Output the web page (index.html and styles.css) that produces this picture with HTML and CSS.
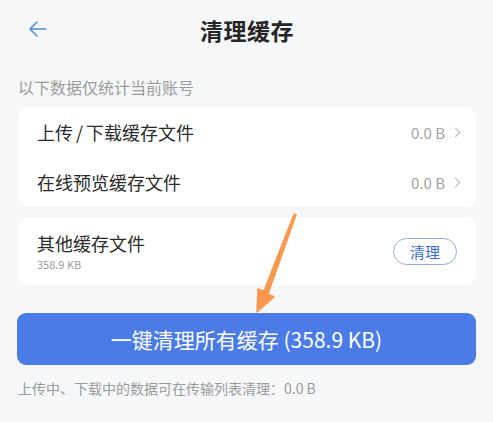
FILE: index.html
```html
<!DOCTYPE html>
<html lang="zh-CN">
<head>
    <meta charset="UTF-8">
    <meta name="viewport" content="width=device-width, initial-scale=1.0">
    <title>清理缓存</title>
    <link rel="stylesheet" href="styles.css">
</head>
<body>
    <div class="page">
        <header class="topbar">
            <button class="back" aria-label="返回">
                <svg width="18" height="16" viewBox="0 0 18 16" fill="none" stroke="#4a8de2" stroke-width="1.6" stroke-linecap="round" stroke-linejoin="round">
                    <path d="M8 1 L1 8 L8 15 M1 8 H17"/>
                </svg>
            </button>
            <h1>清理缓存</h1>
        </header>

        <p class="hint">以下数据仅统计当前账号</p>

        <div class="card">
            <div class="row">
                <span class="row-title">上传<span class="slash">/</span>下载缓存文件</span>
                <span class="row-value">0.0 B <i class="chevron"></i></span>
            </div>
            <div class="row">
                <span class="row-title">在线预览缓存文件</span>
                <span class="row-value">0.0 B <i class="chevron"></i></span>
            </div>
        </div>

        <div class="card">
            <div class="row row-other">
                <div class="other-text">
                    <span class="row-title">其他缓存文件</span>
                    <span class="row-sub">358.9 KB</span>
                </div>
                <button class="pill">清理</button>
            </div>
        </div>

        <button class="clear-all">一键清理所有缓存 (358.9 KB)</button>

        <p class="foot">上传中、下载中的数据可在传输列表清理：0.0 B</p>

        <svg class="pointer" width="60" height="110" viewBox="0 0 60 110">
            <path d="M54 3 L24 80 L18 78 L17 101 L34 86 L28 83 L56 4 Z" fill="#f79a4f" stroke="#f79a4f" stroke-width="1.5" stroke-linejoin="round"/>
        </svg>
    </div>
</body>
</html>
```

FILE: styles.css
```css
:root {
    --bg: #f6f7f9;
    --card: #ffffff;
    --text: #2b2b2b;
    --muted: #9b9b9b;
    --blue: #4a7be6;
}

* {
    box-sizing: border-box;
}

body {
    margin: 0;
    background: var(--bg);
    font-family: "Noto Sans CJK SC", "Noto Sans", sans-serif;
    color: var(--text);
}

.page {
    position: relative;
    width: 493px;
    height: 422px;
    padding: 0 17px 0 18px;
    overflow: hidden;
}

.topbar {
    position: relative;
    height: 60px;
    display: flex;
    align-items: center;
    justify-content: center;
}

.topbar h1 {
    margin: 0;
    font-size: 23px;
    font-weight: 700;
    color: #262626;
    line-height: 1;
    letter-spacing: 0.5px;
}

.back {
    position: absolute;
    left: 11px;
    top: 21px;
    padding: 0;
    border: none;
    background: none;
    line-height: 0;
}

.hint {
    margin: 17px 0 10px;
    font-size: 16px;
    line-height: 20px;
    color: var(--muted);
}

.card {
    background: var(--card);
    border-radius: 10px;
    margin-bottom: 10px;
}

.row {
    height: 50px;
    display: flex;
    align-items: center;
    justify-content: space-between;
    padding: 0 17px 0 19px;
}

.row-title {
    font-size: 18px;
    line-height: 22px;
    color: var(--text);
}

.slash {
    margin: 0 3px;
}

.row-value {
    display: flex;
    align-items: center;
    font-size: 15px;
    color: #a3a3a3;
}

.chevron {
    display: inline-block;
    width: 7px;
    height: 7px;
    margin-left: 7px;
    border-top: 1.5px solid #b0b0b0;
    border-right: 1.5px solid #b0b0b0;
    transform: rotate(45deg);
}

.row-other {
    height: 68px;
    padding-right: 19px;
}

.other-text {
    display: flex;
    flex-direction: column;
    gap: 3px;
}

.row-sub {
    font-size: 11px;
    line-height: 14px;
    color: var(--muted);
}

.pill {
    width: 64px;
    height: 27px;
    border: 1px solid #93a8d4;
    border-radius: 14px;
    background: #fff;
    color: #3c6dcc;
    font-family: inherit;
    font-size: 15px;
    padding: 0;
}

.clear-all {
    display: block;
    width: 459px;
    height: 52px;
    margin: 28px 0 0 -1px;
    border: none;
    border-radius: 9px;
    background: var(--blue);
    color: #fff;
    font-family: inherit;
    font-size: 21px;
}

.foot {
    margin: 14px 0 0;
    font-size: 14px;
    line-height: 18px;
    color: var(--muted);
}

.pointer {
    position: absolute;
    left: 240px;
    top: 211px;
}
```
